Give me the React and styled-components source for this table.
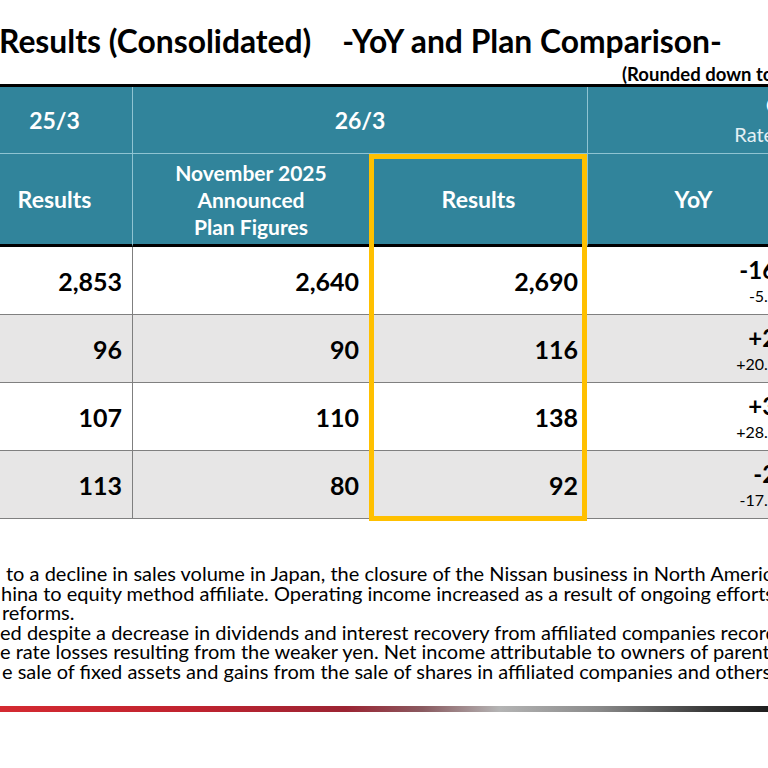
import styled, { createGlobalStyle } from 'styled-components';

const GlobalStyle = createGlobalStyle`
  html, body {
    margin: 0;
    padding: 0;
    background: #fff;
  }
  body {
    overflow: hidden;
    font-family: Lato, "Open Sans", sans-serif;
  }
`;

const TEAL = '#31849b';
const TEAL_RULE = '#8fc4d2';
const GOLD = '#ffc000';

const Slide = styled.div`
  width: 768px;
  height: 768px;
  overflow: hidden;
  background: #fff;
  color: #000;
  display: flex;
  flex-direction: column;
`;

const Title = styled.h1`
  margin: 22px 0 0 -1px;
  font-size: 31.8px;
  line-height: 38px;
  font-weight: 700;
  white-space: pre;
`;

const Unit = styled.div`
  margin: 4px 0 0 622px;
  font-size: 18.5px;
  line-height: 20px;
  font-weight: 700;
  white-space: nowrap;
`;

const TableWrap = styled.div`
  position: relative;
  margin-left: -23px;
  width: 1035px;
  flex-shrink: 0;
`;

const Grid = styled.div`
  display: grid;
  grid-template-columns: 156px 237px 218px 212px 212px;
  border-top: 3px solid #000;
`;

const HeadCell = styled.div`
  grid-column: span ${(p) => p.$span || 1};
  height: ${(p) => p.$h}px;
  box-sizing: border-box;
  background: ${TEAL};
  color: #fff;
  border-right: 1px solid ${TEAL_RULE};
  border-bottom: ${(p) => (p.$closing ? '3px solid #000' : `1px solid ${TEAL_RULE}`)};
  display: flex;
  flex-direction: column;
  align-items: center;
  justify-content: center;
  text-align: center;
  font-size: ${(p) => p.$size || 23}px;
  line-height: ${(p) => p.$lh || 27}px;
  font-weight: 700;
`;

const SubHead = styled.span`
  font-weight: 400;
  color: #e3f0f4;
  font-size: 20px;
`;

const Cell = styled.div`
  height: 68px;
  box-sizing: border-box;
  background: ${(p) => (p.$shade ? '#e7e6e6' : '#fff')};
  border-bottom: 1px solid #808080;
  border-right: ${(p) => (p.$rule ? '1px solid #7f7f7f' : '0')};
  padding-right: 10px;
  display: flex;
  flex-direction: column;
  align-items: flex-end;
  justify-content: center;
  font-size: 25px;
  line-height: 30px;
  font-weight: 700;
`;

const Diff = styled.span`
  font-size: 24px;
  line-height: 28px;
  font-weight: 700;
`;

const Rate = styled.span`
  font-size: 16px;
  line-height: 20px;
  font-weight: 400;
  margin-top: 2px;
`;

const Highlight = styled.div`
  position: absolute;
  left: 392px;
  top: 70px;
  width: 218px;
  height: 367px;
  box-sizing: border-box;
  border: 5px solid ${GOLD};
  pointer-events: none;
`;

const Notes = styled.div`
  margin-top: 45px;
  font-size: 20px;
  line-height: 19.6px;
`;

const Line = styled.div`
  white-space: nowrap;
  padding-left: ${(p) => p.$indent || 0}px;
`;

const Bar = styled.div`
  margin-top: 24px;
  height: 6px;
  flex-shrink: 0;
  background: linear-gradient(
    to right,
    #d42a31 0%,
    #c0232f 25%,
    #9c2433 45%,
    #8a5a60 55%,
    #b4b4b4 65%,
    #8a8a8a 78%,
    #3a3a3a 92%,
    #1e1e1e 100%
  );
`;

const rows = [
  { prev: '2,853', plan: '2,640', result: '2,690', diff: '-163', rate: '-5.7%', vsPlan: '+50', vsRate: '+1.9%' },
  { prev: '96', plan: '90', result: '116', diff: '+20', rate: '+20.8%', vsPlan: '+26', vsRate: '+28.9%' },
  { prev: '107', plan: '110', result: '138', diff: '+30', rate: '+28.9%', vsPlan: '+28', vsRate: '+25.5%' },
  { prev: '113', plan: '80', result: '92', diff: '-20', rate: '-17.7%', vsPlan: '+12', vsRate: '+15.0%' },
];

const notes = [
  { indent: 6, text: 'to a decline in sales volume in Japan, the closure of the Nissan business in North America, and the transfer of' },
  { indent: 1, text: 'hina to equity method affiliate. Operating income increased as a result of ongoing efforts to promote' },
  { indent: 2, text: 'reforms.' },
  { indent: 0, text: 'ed despite a decrease in dividends and interest recovery from affiliated companies recorded in' },
  { indent: 0, text: 'e rate losses resulting from the weaker yen. Net income attributable to owners of parent company' },
  { indent: 2, text: 'e sale of fixed assets and gains from the sale of shares in affiliated companies and others.' },
];

function ResultsTable() {
  return (
    <TableWrap>
      <Grid>
        <HeadCell $h={67}>25/3</HeadCell>
        <HeadCell $h={67} $span={2}>26/3</HeadCell>
        <HeadCell $h={67} $span={2} $size={20} $lh={29}>
          Change
          <SubHead>Rate of change</SubHead>
        </HeadCell>

        <HeadCell $h={93} $closing>Results</HeadCell>
        <HeadCell $h={93} $closing $size={21}>
          November 2025
          <br />
          Announced
          <br />
          Plan Figures
        </HeadCell>
        <HeadCell $h={93} $closing>Results</HeadCell>
        <HeadCell $h={93} $closing>YoY</HeadCell>
        <HeadCell $h={93} $closing>vs. Plan</HeadCell>

        {rows.map((r, i) => {
          const shade = i % 2 === 1;
          return [
            <Cell key={`a${i}`} $shade={shade} $rule>{r.prev}</Cell>,
            <Cell key={`b${i}`} $shade={shade} $rule>{r.plan}</Cell>,
            <Cell key={`c${i}`} $shade={shade}>{r.result}</Cell>,
            <Cell key={`d${i}`} $shade={shade}>
              <Diff>{r.diff}</Diff>
              <Rate>{r.rate}</Rate>
            </Cell>,
            <Cell key={`e${i}`} $shade={shade}>
              <Diff>{r.vsPlan}</Diff>
              <Rate>{r.vsRate}</Rate>
            </Cell>,
          ];
        })}
      </Grid>
      <Highlight />
    </TableWrap>
  );
}

export default function App() {
  return (
    <Slide>
      <GlobalStyle />
      <Title>{'Results (Consolidated)    -YoY and Plan Comparison-'}</Title>
      <Unit>(Rounded down to the nearest 100 million yen)</Unit>
      <ResultsTable />
      <Notes>
        {notes.map((n, i) => (
          <Line key={i} $indent={n.indent}>{n.text}</Line>
        ))}
      </Notes>
      <Bar />
    </Slide>
  );
}
